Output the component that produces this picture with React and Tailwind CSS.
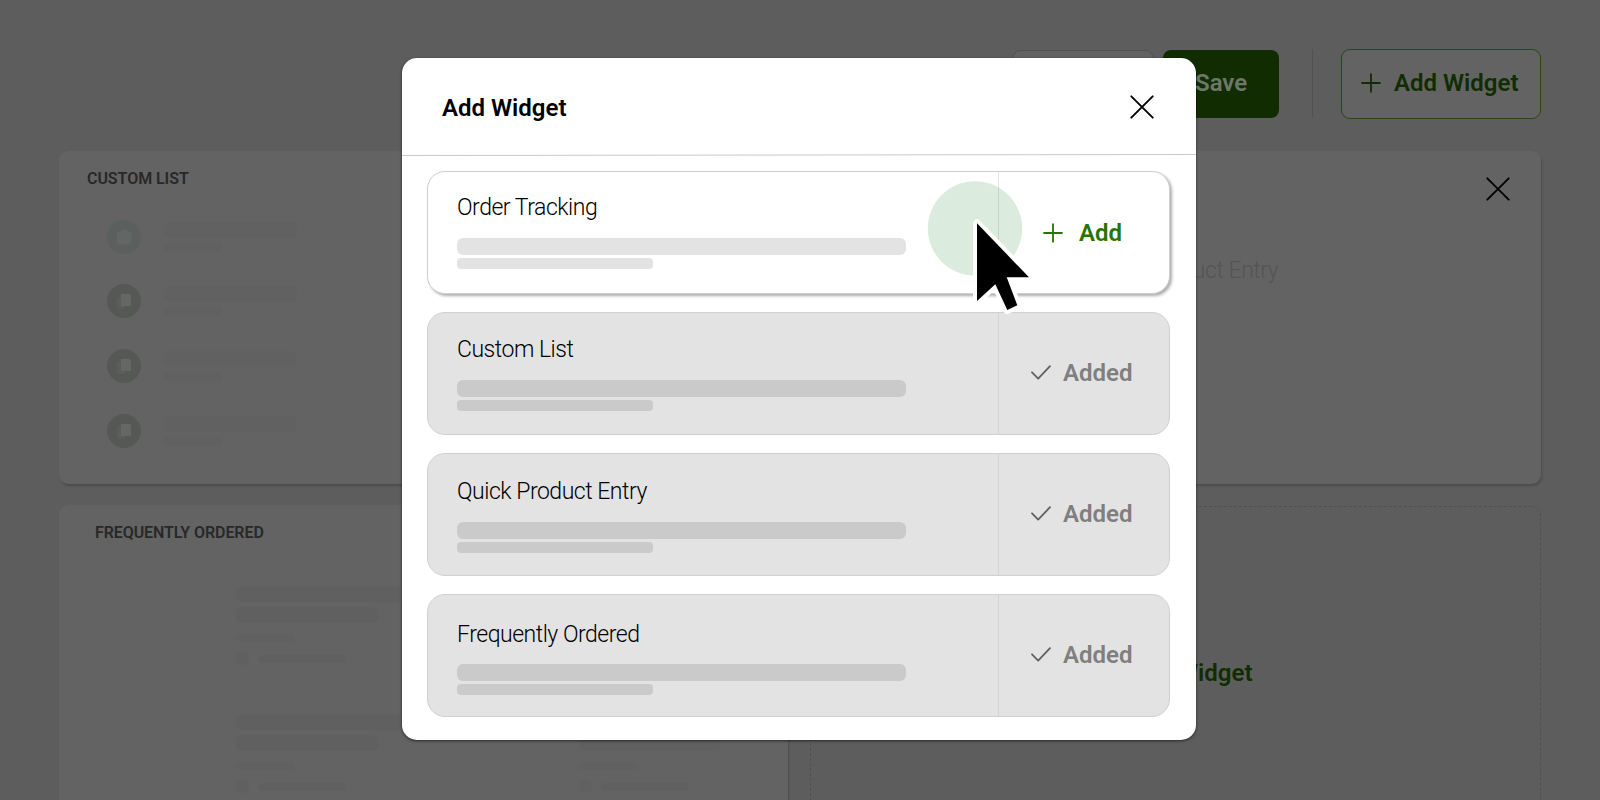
import React from "react";

const groupRows = [
  { mt: "mt-0", kind: "folder" },
  { mt: "mt-[30px]", kind: "doc" },
  { mt: "mt-[31px]", kind: "doc" },
  { mt: "mt-[31px]", kind: "doc" },
];

const widgets = [
  { title: "Order Tracking", added: false, pad: "pt-[21px]", gap: "mt-[15px]" },
  { title: "Custom List", added: true, pad: "pt-[22px]", gap: "mt-[15px]" },
  { title: "Quick Product Entry", added: true, pad: "pt-[23px]", gap: "mt-[15px]" },
  { title: "Frequently Ordered", added: true, pad: "pt-[25px]", gap: "mt-[14px]" },
];

function Cross({ className }) {
  return (
    <svg className={className} viewBox="0 0 24 24" fill="none" stroke="#000" strokeWidth="1.9" strokeLinecap="round">
      <path d="M1.3 1.3 L22.7 22.7 M22.7 1.3 L1.3 22.7" />
    </svg>
  );
}

function Plus({ color }) {
  return (
    <svg className="size-5 shrink-0" viewBox="0 0 20 20" fill="none" stroke={color} strokeWidth="1.8">
      <path d="M10 0.4 V19.6 M0.4 10 H19.6" />
    </svg>
  );
}

function Check() {
  return (
    <svg className="h-[15px] w-5 shrink-0" viewBox="0 0 20 15" fill="none" stroke="#606060" strokeWidth="1.8" strokeLinecap="round" strokeLinejoin="round">
      <path d="M1 7.3 L7.2 13.6 L19 1.2" />
    </svg>
  );
}

function RowIcon({ kind }) {
  return (
    <svg className="size-[34px] shrink-0" viewBox="0 0 34 34">
      <circle cx="17" cy="17" r="17" fill={kind === "folder" ? "#5b5f5e" : "#565856"} />
      {kind === "folder" ? (
        <path d="M10 11.5 H14 L15.5 10 H20 L21.5 12 H25 L24 22 L22 24.5 H11.5 L9.5 22 Z" fill="#636666" />
      ) : (
        <>
          <path d="M10 13 H14 V22 H18 V25 H12 Q10 25 10 23 Z" fill="#5b5d5b" />
          <path d="M14 10 H23 L24 11 V22 H14 Z" fill="#656765" />
        </>
      )}
    </svg>
  );
}

function ProductSkeleton() {
  return (
    <div className="h-32">
      <div className="h-4 w-[196px] rounded-md bg-[#606060]" />
      <div className="mt-[5px] h-4 w-[142px] rounded-md bg-[#606060]" />
      <div className="mt-[11px] h-2 w-[58px] rounded bg-[#616161]" />
      <div className="mt-2.5 flex items-center gap-[9px]">
        <div className="size-[13px] rounded-full bg-[#606060]" />
        <div className="h-2 w-[88px] rounded bg-[#606060]" />
      </div>
    </div>
  );
}

function WidgetCard({ title, added, pad, gap }) {
  const bar = added ? "bg-[#cacaca]" : "bg-[#e3e3e3]";
  return (
    <div
      className={
        added
          ? "flex h-[123px] rounded-[18px] border border-[#d0d0d0] bg-[#e3e3e3]"
          : "flex h-[123px] rounded-[18px] border border-[#cfcfcf] bg-white shadow-[2px_2px_3px_rgba(0,0,0,0.32)]"
      }
    >
      <div className={`w-[570px] pl-[29px] ${pad}`}>
        <div className="h-[30px] whitespace-nowrap text-[23px] leading-[30px] font-light tracking-[-0.48px] text-black">{title}</div>
        <div className={`${gap} h-[17px] w-[449px] rounded-[6px] ${bar}`} />
        <div className={`mt-[3px] h-[11px] w-[196px] rounded-[4px] ${bar}`} />
      </div>
      {added ? (
        <div className="flex flex-1 items-center border-l border-[#d4d4d4] pb-0.5 pl-8 text-[24px] font-semibold text-[#7f7f7f]">
          <Check />
          <span className="ml-3">Added</span>
        </div>
      ) : (
        <div className="flex flex-1 items-center border-l border-[#e3e3e3] pl-11 text-[24px] font-semibold text-[#287400]">
          <Plus color="#287400" />
          <span className="ml-4">Add</span>
        </div>
      )}
    </div>
  );
}

export default function App() {
  return (
    <div className="relative h-[800px] w-[1600px] overflow-hidden bg-[#5d5d5d] font-['Roboto',sans-serif]">
      <header className="flex h-[151px] items-start justify-end pt-[49px] pr-[59px]">
        <div className="mt-px h-[68px] w-[142px] rounded-[9px] border border-[#505050] bg-[#626262]" />
        <div className="mt-px ml-[9px] flex h-[68px] w-[116px] items-center rounded-[8px] bg-[#112d00] pb-0.5 pl-8 text-[24px] font-semibold text-[#6d776a]">
          Save
        </div>
        <div className="ml-[33px] h-[69px] w-px bg-[#525252]" />
        <div className="ml-[28px] flex h-[70px] w-[200px] items-center rounded-[9px] border border-[#28461a] bg-[#636363] pb-0.5 pl-[19px] text-[24px] font-semibold text-[#112d00]">
          <Plus color="#112d00" />
          <span className="ml-[13px] whitespace-nowrap">Add Widget</span>
        </div>
      </header>

      <main className="grid h-[720px] grid-cols-[729px_731px] grid-rows-[333px_380px] gap-x-[22px] gap-y-[21px] pl-[59px]">
        <section className="rounded-[9px] bg-[#636363] pt-[18px] pl-7 shadow-[1px_2px_2px_#4c4c4c]">
          <h2 className="h-5 text-[16px] leading-5 font-semibold tracking-[-0.05px] text-[#282828]">CUSTOM LIST</h2>
          <div className="mt-[31px] ml-5">
            {groupRows.map((r, i) => (
              <div key={i} className={`flex ${r.mt}`}>
                <RowIcon kind={r.kind} />
                <div className="ml-[23px] pt-0.5">
                  <div className="h-4 w-[133px] rounded-md bg-[#616161]" />
                  <div className="mt-[5px] h-[9px] w-[58px] rounded bg-[#616161]" />
                </div>
              </div>
            ))}
          </div>
        </section>

        <section className="flex flex-col rounded-[9px] bg-[#636363] shadow-[1px_2px_2px_#4c4c4c]">
          <Cross className="mt-[26px] mr-[31px] h-6 w-6 self-end" />
          <div className="mt-[55px] ml-[278px] h-[30px] whitespace-nowrap text-[23px] leading-[30px] font-light tracking-[-0.46px] text-[#545454]">
            Quick Product Entry
          </div>
        </section>

        <section className="rounded-[9px] bg-[#636363] pt-[18px] shadow-[1px_2px_2px_#4c4c4c]">
          <h2 className="ml-9 h-5 text-[16px] leading-5 font-semibold tracking-[-0.08px] text-[#282828]">FREQUENTLY ORDERED</h2>
          <div className="mt-[43px] ml-[177px] grid grid-cols-[343px_196px]">
            <ProductSkeleton />
            <ProductSkeleton />
            <ProductSkeleton />
            <ProductSkeleton />
          </div>
        </section>

        <section className="mt-px rounded-[9px] border border-dashed border-[#505050] pt-[150px] pl-[317px] text-[24px] leading-8 font-semibold text-[#112d00]">
          Add Widget
        </section>
      </main>

      <div role="dialog" className="absolute top-[58px] left-[402px] h-[682px] w-[794px] rounded-[15px] bg-white shadow-[0_1px_3px_rgba(0,0,0,0.6)]">
        <div className="flex h-[95px] items-center justify-between pt-[4px] pr-[42px] pl-10">
          <h1 className="text-[24px] font-semibold text-black">Add Widget</h1>
          <Cross className="mb-px size-6" />
        </div>
        <svg className="block h-[3px] w-full" viewBox="0 0 794 3">
          <line x1="0" y1="2.5" x2="794" y2="1.5" stroke="#c9c9c9" />
        </svg>
        <div className="flex flex-col gap-[18px] pt-[15px] pr-[26px] pl-[25px]">
          {widgets.map((w) => (
            <WidgetCard key={w.title} {...w} />
          ))}
        </div>
      </div>

      <svg className="absolute top-[176px] left-[920px] h-[144px] w-[120px]" viewBox="920 176 120 144">
        <circle cx="975" cy="228.4" r="47.2" fill="#0e7a1e" fillOpacity="0.15" />
        <path
          d="M977 223.3 V301 L995.3 284.3 L1007.3 310 L1017.3 305.3 L1006.7 277.3 H1029 Z"
          fill="#000"
          stroke="#fff"
          strokeWidth="8"
          strokeLinejoin="round"
          paintOrder="stroke"
        />
      </svg>
    </div>
  );
}
